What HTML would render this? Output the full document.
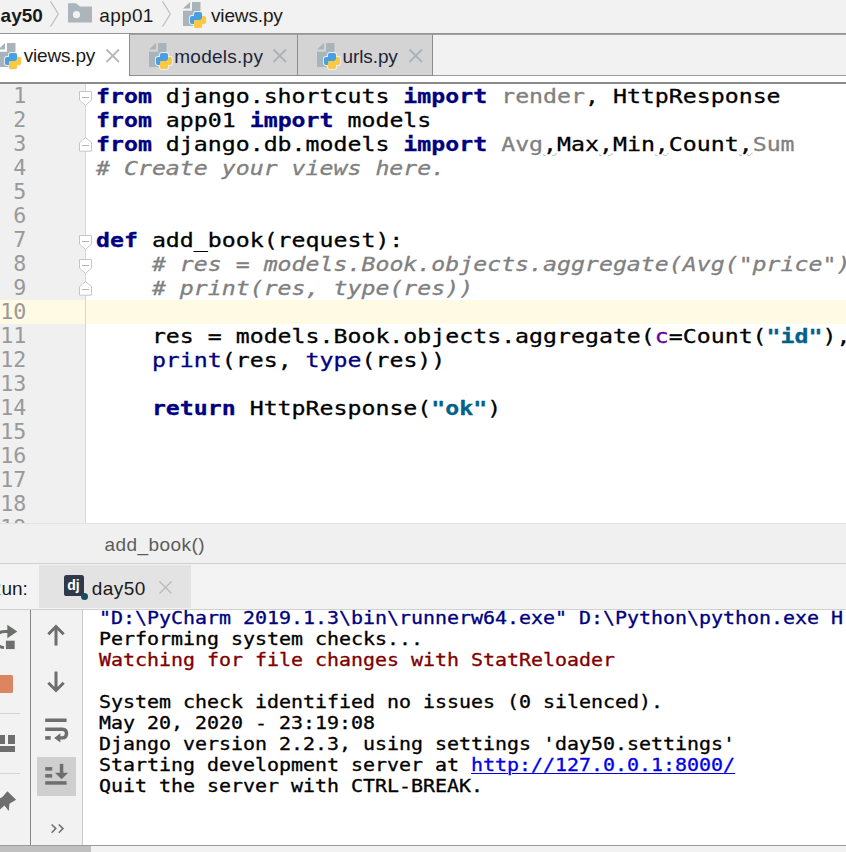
<!DOCTYPE html>
<html lang="en">
<head>
<meta charset="utf-8">
<title>views.py - day50</title>
<style>
*{box-sizing:border-box;margin:0;padding:0}
html,body{width:846px;height:852px;overflow:hidden;background:#f2f2f2}
body{position:relative;font-family:"Liberation Sans","DejaVu Sans",sans-serif;font-size:19px;color:#1a1a1a}
.abs{position:absolute}
svg{position:absolute;overflow:visible}
/* ---------- top breadcrumb ---------- */
#crumbs{left:0;top:0;width:846px;height:33px;background:#f2f2f2}
#crumbs span{position:absolute;top:5px;line-height:22px;white-space:nowrap}
/* ---------- tabs ---------- */
#tabline{left:0;top:33px;width:846px;height:1px;background:#949494}
#tabs{left:0;top:34px;width:846px;height:48px;background:#fff}
#tabrest{left:432px;top:34px;width:414px;height:41px;background:#f2f2f2;border-top:1px solid #a2a2a2}
#tabrestline{left:432px;top:75px;width:414px;height:1px;background:#9c9c9c}
.tab{position:absolute;top:34px;height:42px;background:#d4d4d4;border-left:1px solid #8e8e8e;border-bottom:1px solid #8e8e8e;border-top:1px solid #a2a2a2}
.tabtxt{position:absolute;line-height:22px;white-space:nowrap;top:45px}
#edtop{left:0;top:82px;width:846px;height:2px;background:#8c8c8c}
/* ---------- editor ---------- */
#editor{left:0;top:84px;width:846px;height:439px;background:#fff;overflow:hidden}
#gutter{left:0;top:0;width:85px;height:439px;background:#f0f0f0}
#gutline{left:85px;top:0;width:1px;height:439px;background:#d6d6d6}
#curline{left:0;top:216px;width:846px;height:24px;background:#fffae3}
.mono{font-family:"DejaVu Sans Mono","Liberation Mono",monospace}
#nums{left:0;top:-0.5px;width:26.2px;text-align:right;color:#999;font-size:21px;line-height:24px;white-space:pre;transform:scaleX(1.03);transform-origin:100% 0}
#code{-webkit-text-stroke:0.3px;left:95.5px;top:-0.5px;font-size:20px;line-height:24px;white-space:pre;color:#000;transform:scaleX(1.1602);transform-origin:0 0}
#code b,.kw{color:#000080;font-weight:bold}
.bi{color:#000080}
.un{color:#808080}
.cm{color:#808080;font-style:italic}
.st{color:#00618a;font-weight:bold}
.ka{color:#660099}
.wv{text-decoration:underline wavy #c4c4b8 1px;text-underline-offset:0.5px}
/* ---------- editor breadcrumb ---------- */
#ebar{left:0;top:523px;width:846px;height:41px;background:#f0f0f0;border-top:1px solid #e2e2e2;border-bottom:1px solid #cfcfcf}
#ebar span{position:absolute;left:104.5px;top:10px;line-height:22px;color:#5c5c5c;font-size:19px;letter-spacing:0.45px}
/* ---------- run header ---------- */
#runhead{left:0;top:564px;width:846px;height:45px;background:#f3f3f3}
#runtab{left:39px;top:565px;width:152px;height:43px;background:#e3e3e3}
#runline{left:0;top:609px;width:846px;height:1px;background:#d0d0d0}
/* ---------- console ---------- */
#col1{left:0;top:610px;width:30px;height:235px;background:#f2f2f2}
#col1line{left:30px;top:610px;width:1px;height:235px;background:#858585}
#col2{left:31px;top:610px;width:51px;height:235px;background:#f2f2f2}
#col2line{left:82px;top:610px;width:1px;height:235px;background:#c9c9c9}
#console{left:83px;top:610px;width:763px;height:235px;background:#fff;overflow:hidden}
#out{-webkit-text-stroke:0.32px;left:15.7px;top:-3.5px;font-size:18px;line-height:21px;white-space:pre;color:#000;transform:scaleX(1.1075);transform-origin:0 0}
.c1{color:#00007f}.c3{color:#7f0000}
#out a{color:#0000ee;text-decoration:underline;text-decoration-thickness:1px;text-underline-offset:2px}
#botline{left:0;top:845px;width:846px;height:1px;background:#9c9c9c}
#botbar{left:0;top:846px;width:846px;height:6px;background:#f2f2f2}
#botthumb{left:0;top:846px;width:91px;height:6px;background:#c0c0c0}
</style>
</head>
<body>

<!-- top breadcrumb -->
<div id="crumbs" class="abs">
  <span style="left:-11px;font-weight:bold;font-size:19px">day50</span>
  <span style="left:99.3px;letter-spacing:0.3px">app01</span>
  <span style="left:211px;letter-spacing:-0.15px">views.py</span>
  <svg style="left:50px;top:1px" width="9" height="26" viewBox="0 0 9 26"><path d="M0.5,0.3 L8.3,13 L0.5,25.7" stroke="#c2c2c2" stroke-width="1.3" fill="none"/></svg>
  <svg style="left:162px;top:1px" width="9" height="26" viewBox="0 0 9 26"><path d="M0.5,0.3 L8.3,13 L0.5,25.7" stroke="#c2c2c2" stroke-width="1.3" fill="none"/></svg>
  <svg style="left:68px;top:3px" width="24" height="20" viewBox="0 0 24 20"><path d="M0,0.3 H7.8 L12.1,3.6 H24 V19.5 H0 Z" fill="#abb5bb"/><circle cx="8.5" cy="11.7" r="3.6" fill="#f2f2f2"/></svg>
  <svg style="left:183.2px;top:1.7px" width="24" height="27" viewBox="0 0 24 27">
  <path d="M0,6.6 L7,0 V6.6 Z M9,0 H17.5 V24 H0 V8.8 H9 Z" fill="#a9b3ba"/>
  <g transform="translate(6.9,9.9) scale(1.0125)">
    <path d="M6,0 H10 Q12,0 12,2 V6 Q12,8 10,8 H6 Q4,8 4,10 V12 H2 Q0,12 0,10 V6 Q0,4 2,4 H4 V2 Q4,0 6,0 Z M10,16 H6 Q4,16 4,14 V10 Q4,8 6,8 H10 Q12,8 12,6 V4 H14 Q16,4 16,6 V10 Q16,12 14,12 H12 V14 Q12,16 10,16 Z" fill="#eef0f1" stroke="#eef0f1" stroke-width="1.8" stroke-linejoin="round"/>
    <path d="M6,0 H10 Q12,0 12,2 V6 Q12,8 10,8 H6 Q4,8 4,10 V12 H2 Q0,12 0,10 V6 Q0,4 2,4 H4 V2 Q4,0 6,0 Z" fill="#4a9fe3"/>
    <path d="M10,16 H6 Q4,16 4,14 V10 Q4,8 6,8 H10 Q12,8 12,6 V4 H14 Q16,4 16,6 V10 Q16,12 14,12 H12 V14 Q12,16 10,16 Z" fill="#fbc93d"/>
  </g>
</svg>
</div>

<!-- tabs -->
<div id="tabline" class="abs"></div>
<div id="tabs" class="abs"></div>
<div id="tabrest" class="abs"></div>
<div id="tabrestline" class="abs"></div>
<div class="tab" style="left:129px;width:168px"></div>
<div class="tab" style="left:297px;width:136px;border-right:1px solid #8e8e8e"></div>
<span class="tabtxt" style="left:23.8px;letter-spacing:-0.2px">views.py</span>
<span class="tabtxt" style="left:174.3px;top:46px;color:#1c2638;letter-spacing:0.25px">models.py</span>
<span class="tabtxt" style="left:342.5px;top:46px;color:#1c2638;letter-spacing:-0.1px">urls.py</span>
<svg style="left:-1.8px;top:42.8px" width="24" height="27" viewBox="0 0 24 27">
  <path d="M0,6.6 L7,0 V6.6 Z M9,0 H17.5 V24 H0 V8.8 H9 Z" fill="#a9b3ba"/>
  <g transform="translate(6.9,9.9) scale(1.0125)">
    <path d="M6,0 H10 Q12,0 12,2 V6 Q12,8 10,8 H6 Q4,8 4,10 V12 H2 Q0,12 0,10 V6 Q0,4 2,4 H4 V2 Q4,0 6,0 Z M10,16 H6 Q4,16 4,14 V10 Q4,8 6,8 H10 Q12,8 12,6 V4 H14 Q16,4 16,6 V10 Q16,12 14,12 H12 V14 Q12,16 10,16 Z" fill="#eef0f1" stroke="#eef0f1" stroke-width="1.8" stroke-linejoin="round"/>
    <path d="M6,0 H10 Q12,0 12,2 V6 Q12,8 10,8 H6 Q4,8 4,10 V12 H2 Q0,12 0,10 V6 Q0,4 2,4 H4 V2 Q4,0 6,0 Z" fill="#4a9fe3"/>
    <path d="M10,16 H6 Q4,16 4,14 V10 Q4,8 6,8 H10 Q12,8 12,6 V4 H14 Q16,4 16,6 V10 Q16,12 14,12 H12 V14 Q12,16 10,16 Z" fill="#fbc93d"/>
  </g>
</svg>
<svg style="left:149.1px;top:42.9px" width="24" height="27" viewBox="0 0 24 27">
  <path d="M0,6.6 L7,0 V6.6 Z M9,0 H17.5 V24 H0 V8.8 H9 Z" fill="#a9b3ba"/>
  <g transform="translate(6.9,9.9) scale(1.0125)">
    <path d="M6,0 H10 Q12,0 12,2 V6 Q12,8 10,8 H6 Q4,8 4,10 V12 H2 Q0,12 0,10 V6 Q0,4 2,4 H4 V2 Q4,0 6,0 Z M10,16 H6 Q4,16 4,14 V10 Q4,8 6,8 H10 Q12,8 12,6 V4 H14 Q16,4 16,6 V10 Q16,12 14,12 H12 V14 Q12,16 10,16 Z" fill="#eef0f1" stroke="#eef0f1" stroke-width="1.8" stroke-linejoin="round"/>
    <path d="M6,0 H10 Q12,0 12,2 V6 Q12,8 10,8 H6 Q4,8 4,10 V12 H2 Q0,12 0,10 V6 Q0,4 2,4 H4 V2 Q4,0 6,0 Z" fill="#4a9fe3"/>
    <path d="M10,16 H6 Q4,16 4,14 V10 Q4,8 6,8 H10 Q12,8 12,6 V4 H14 Q16,4 16,6 V10 Q16,12 14,12 H12 V14 Q12,16 10,16 Z" fill="#fbc93d"/>
  </g>
</svg>
<svg style="left:317.2px;top:42.9px" width="24" height="27" viewBox="0 0 24 27">
  <path d="M0,6.6 L7,0 V6.6 Z M9,0 H17.5 V24 H0 V8.8 H9 Z" fill="#a9b3ba"/>
  <g transform="translate(6.9,9.9) scale(1.0125)">
    <path d="M6,0 H10 Q12,0 12,2 V6 Q12,8 10,8 H6 Q4,8 4,10 V12 H2 Q0,12 0,10 V6 Q0,4 2,4 H4 V2 Q4,0 6,0 Z M10,16 H6 Q4,16 4,14 V10 Q4,8 6,8 H10 Q12,8 12,6 V4 H14 Q16,4 16,6 V10 Q16,12 14,12 H12 V14 Q12,16 10,16 Z" fill="#eef0f1" stroke="#eef0f1" stroke-width="1.8" stroke-linejoin="round"/>
    <path d="M6,0 H10 Q12,0 12,2 V6 Q12,8 10,8 H6 Q4,8 4,10 V12 H2 Q0,12 0,10 V6 Q0,4 2,4 H4 V2 Q4,0 6,0 Z" fill="#4a9fe3"/>
    <path d="M10,16 H6 Q4,16 4,14 V10 Q4,8 6,8 H10 Q12,8 12,6 V4 H14 Q16,4 16,6 V10 Q16,12 14,12 H12 V14 Q12,16 10,16 Z" fill="#fbc93d"/>
  </g>
</svg>
<svg style="left:105.5px;top:48.5px" width="13.5" height="13.5" viewBox="0 0 13.5 13.5"><path d="M0.5,0.5 L13.0,13.0 M13.0,0.5 L0.5,13.0" stroke="#b7b7b7" stroke-width="1.8" fill="none"/></svg>
<svg style="left:273.3px;top:48.5px" width="13.5" height="13.5" viewBox="0 0 13.5 13.5"><path d="M0.5,0.5 L13.0,13.0 M13.0,0.5 L0.5,13.0" stroke="#a9b4b8" stroke-width="1.8" fill="none"/></svg>
<svg style="left:408.7px;top:48.5px" width="13.5" height="13.5" viewBox="0 0 13.5 13.5"><path d="M0.5,0.5 L13.0,13.0 M13.0,0.5 L0.5,13.0" stroke="#a9b4b8" stroke-width="1.8" fill="none"/></svg>
<div id="edtop" class="abs"></div>

<!-- editor -->
<div id="editor" class="abs">
  <div id="gutter" class="abs"></div>
  <div id="curline" class="abs"></div>
  <div id="gutline" class="abs"></div>
<svg style="left:79px;top:7px" width="13" height="15" viewBox="0 0 13 15"><path d="M0.5,0.5 H12.5 V9.2 L6.5,14.4 L0.5,9.2 Z" fill="#fff" stroke="#c6c6c6"/><path d="M3,6.5 H10" stroke="#b5b5b5" stroke-width="1"/></svg>
<svg style="left:79px;top:53.3px" width="13" height="15" viewBox="0 0 13 15"><path d="M6.5,0.6 L12.5,5.6 V14.2 H0.5 V5.6 Z" fill="#fff" stroke="#c6c6c6"/><path d="M3,8.5 H10" stroke="#b5b5b5" stroke-width="1"/></svg>
<svg style="left:79px;top:151px" width="13" height="15" viewBox="0 0 13 15"><path d="M0.5,0.5 H12.5 V9.2 L6.5,14.4 L0.5,9.2 Z" fill="#fff" stroke="#c6c6c6"/><path d="M3,6.5 H10" stroke="#b5b5b5" stroke-width="1"/></svg>
<svg style="left:79px;top:175px" width="13" height="15" viewBox="0 0 13 15"><path d="M0.5,0.5 H12.5 V9.2 L6.5,14.4 L0.5,9.2 Z" fill="#fff" stroke="#c6c6c6"/><path d="M3,6.5 H10" stroke="#b5b5b5" stroke-width="1"/></svg>
<svg style="left:79px;top:197.3px" width="13" height="15" viewBox="0 0 13 15"><path d="M6.5,0.6 L12.5,5.6 V14.2 H0.5 V5.6 Z" fill="#fff" stroke="#c6c6c6"/><path d="M3,8.5 H10" stroke="#b5b5b5" stroke-width="1"/></svg>
<div id="nums" class="abs mono">1
2
3
4
5
6
7
8
9
10
11
12
13
14
15
16
17
18
19</div>
<div id="code" class="abs mono"><b>from</b> django.shortcuts <b>import</b> <span class="un">render</span>, HttpResponse
<b>from</b> app01 <b>import</b> models
<b>from</b> django.db.models <b>import</b> <span class="un">Avg</span><span class="wv">,</span>Max<span class="wv">,</span>Min<span class="wv">,</span>Count<span class="wv">,</span><span class="un">Sum</span>
<span class="cm"># Create your views here.</span>


<b>def</b> add_book(request):
    <span class="cm"># res = models.Book.objects.aggregate(Avg("price"), Max("price"), Min("price"))</span>
    <span class="cm"># print(res, type(res))</span>

    res = models.Book.objects.aggregate(<span class="ka">c</span>=Count(<span class="st">"id"</span>), s=Sum(<span class="st">"price"</span>))
    <span class="bi">print</span>(res, <span class="bi">type</span>(res))

    <b>return</b> HttpResponse(<span class="st">"ok"</span>)
</div>
</div>

<!-- editor breadcrumb -->
<div id="ebar" class="abs"><span>add_book()</span></div>

<!-- run header -->
<div id="runhead" class="abs"></div>
<div id="runtab" class="abs"></div>
<span class="abs" style="left:-12.3px;top:578px;line-height:22px;white-space:nowrap">Run:</span>
<span class="abs" style="left:91.7px;top:578px;line-height:22px;white-space:nowrap;letter-spacing:0.45px">day50</span>

<div class="abs" style="left:63.6px;top:575.1px;width:20.8px;height:20.8px;border-radius:2.6px;background:#2e3a4b"></div>
<span class="abs" style="left:67.3px;top:577.2px;font-family:'Liberation Sans','DejaVu Sans',sans-serif;font-weight:bold;font-size:14px;line-height:16px;letter-spacing:-0.2px;color:#fff">dj</span>
<div class="abs" style="left:81px;top:593.1px;width:7px;height:7px;border-radius:50%;background:#1c4a5e"></div>
<svg style="left:159px;top:581px" width="13" height="13" viewBox="0 0 13 13"><path d="M0.5,0.5 L12.5,12.5 M12.5,0.5 L0.5,12.5" stroke="#b9b9b9" stroke-width="1.4" fill="none"/></svg>
<div id="runline" class="abs"></div>

<!-- console -->
<div id="col1" class="abs"></div>
<div id="col1line" class="abs"></div>
<div id="col2" class="abs"></div>
<div id="col2line" class="abs"></div>

<!-- column 1 icons -->
<svg style="left:0;top:620px" width="30" height="34" viewBox="0 620 30 34">
  <path d="M-4,640 Q-4,631.5 5,631.5 H9" stroke="#6a7169" stroke-width="3" fill="none"/>
  <path d="M7.3,624.8 L17.3,631.5 L7.3,638.2 Z" fill="#6a7169"/>
  <rect x="5.9" y="640.7" width="8.8" height="8.4" fill="#6e6e6e"/>
  <path d="M-2,644 Q-1,647.5 4,647.5" stroke="#6a7169" stroke-width="3" fill="none"/>
</svg>
<div class="abs" style="left:-2px;top:675px;width:14.7px;height:17.7px;border-radius:1.5px;background:#db8561"></div>
<div class="abs" style="left:0;top:713px;width:20px;height:1px;background:#d2d2d2"></div>
<div class="abs" style="left:0;top:735.2px;width:5.3px;height:8.4px;background:#6e6e6e"></div>
<div class="abs" style="left:7.6px;top:735.2px;width:7.1px;height:8.4px;background:#6e6e6e"></div>
<div class="abs" style="left:0;top:746.3px;width:14.7px;height:5.9px;background:#6e6e6e"></div>
<div class="abs" style="left:0;top:773px;width:20px;height:1px;background:#d2d2d2"></div>
<svg style="left:0;top:788px" width="20" height="26" viewBox="0 788 20 26">
  <path d="M7.4,791.2 L16.1,799.8 L9.4,803.8 L8.8,811 L4.4,805.6 L-1,810.3 L-1,798.6 L2.4,797 Z" fill="#6e6e6e"/>
</svg>
<!-- column 2 icons -->
<svg style="left:44px;top:620px" width="26" height="30" viewBox="44 620 26 30">
  <path d="M56,645.4 V626.5 M48.3,634.2 L56,626.5 L63.7,634.2" stroke="#6e6e6e" stroke-width="3" fill="none"/>
</svg>
<svg style="left:44px;top:668px" width="26" height="30" viewBox="44 668 26 30">
  <path d="M56,671.6 V690.5 M48.3,682.8 L56,690.5 L63.7,682.8" stroke="#6e6e6e" stroke-width="3" fill="none"/>
</svg>
<svg style="left:44px;top:714px" width="28" height="32" viewBox="44 714 28 32">
  <rect x="45.2" y="718.5" width="21.4" height="3.5" fill="#6e6e6e"/>
  <path d="M45.2,729.3 H62.5 Q66.5,729.3 66.5,733.6 Q66.5,737.9 62.5,737.9 H59" stroke="#6e6e6e" stroke-width="3.4" fill="none"/>
  <path d="M54.2,737.9 L60.4,733.3 V742.5 Z" fill="#6e6e6e"/>
  <rect x="45.2" y="736.1" width="5.5" height="3.6" fill="#6e6e6e"/>
</svg>
<div class="abs" style="left:37.2px;top:757.1px;width:38.7px;height:38.5px;background:#cfcfcf"></div>
<svg style="left:44px;top:760px" width="28" height="30" viewBox="44 760 28 30">
  <rect x="45.2" y="767.1" width="7" height="3.5" fill="#6e6e6e"/>
  <rect x="45.2" y="774.1" width="7" height="3.5" fill="#6e6e6e"/>
  <rect x="45.2" y="781.2" width="21.4" height="3.5" fill="#6e6e6e"/>
  <rect x="59.8" y="763.9" width="3.5" height="10" fill="#6e6e6e"/>
  <path d="M54.9,772.7 H68.2 L61.55,779.3 Z" fill="#6e6e6e"/>
</svg>
<svg style="left:50px;top:823px" width="15" height="11" viewBox="50 823 15 11">
  <path d="M51.6,824.5 L55.8,828.6 L51.6,832.7 M58.8,824.5 L63,828.6 L58.8,832.7" stroke="#6e6e6e" stroke-width="1.5" fill="none"/>
</svg>
<div id="console" class="abs">
<div id="out" class="abs mono"><span class="c1">"D:\PyCharm 2019.1.3\bin\runnerw64.exe" D:\Python\python.exe H:/day50/manage.py runserver 8000</span>
Performing system checks...
<span class="c3">Watching for file changes with StatReloader</span>

System check identified no issues (0 silenced).
May 20, 2020 - 23:19:08
Django version 2.2.3, using settings 'day50.settings'
Starting development server at <a>http://127.0.0.1:8000/</a>
Quit the server with CTRL-BREAK.
</div>
</div>
<div id="botline" class="abs"></div>
<div id="botbar" class="abs"></div>
<div id="botthumb" class="abs"></div>

</body>
</html>
